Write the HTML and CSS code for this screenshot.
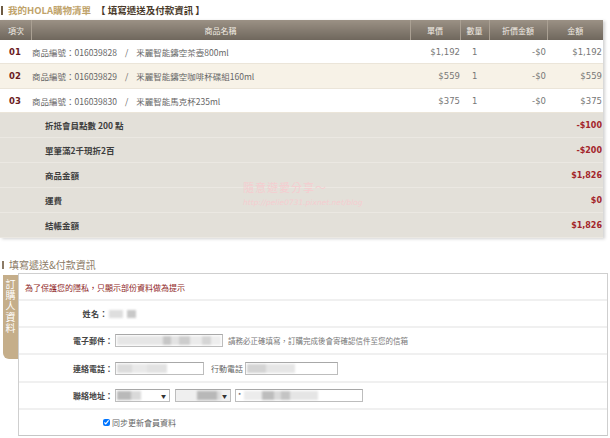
FILE: index.html
```html
<!DOCTYPE html>
<html lang="zh-Hant">
<head>
  <meta charset="UTF-8" />
  <title>我的HOLA購物清單</title>
  <link rel="stylesheet" href="styles.css">
</head>
<body>
  <div class="page">

    <h2 class="sec-title">
      <span class="bar"></span>
      <span class="gold">我的HOLA購物清單</span><span class="dark">【 填寫遞送及付款資訊 】</span>
    </h2>

    <div class="cart-wrap">
      <table class="cart">
        <colgroup>
          <col style="width:31px"><col style="width:379px"><col style="width:50px">
          <col style="width:29px"><col style="width:58px"><col style="width:56px">
        </colgroup>
        <thead>
          <tr>
            <th class="th-no">項次</th>
            <th>商品名稱</th>
            <th>單價</th>
            <th>數量</th>
            <th>折價金額</th>
            <th>金額</th>
          </tr>
        </thead>
        <tbody>
          <tr class="item">
            <td class="no">01</td>
            <td class="name">商品編號：016039828<span class="slash">/</span>釆麗智能鑄空茶壺800ml</td>
            <td class="num price">$1,192</td>
            <td class="num qty">1</td>
            <td class="num disc">-$0</td>
            <td class="num amt">$1,192</td>
          </tr>
          <tr class="item alt">
            <td class="no">02</td>
            <td class="name">商品編號：016039829<span class="slash">/</span>釆麗智能鑄空咖啡杯碟組160ml</td>
            <td class="num price">$559</td>
            <td class="num qty">1</td>
            <td class="num disc">-$0</td>
            <td class="num amt">$559</td>
          </tr>
          <tr class="item">
            <td class="no">03</td>
            <td class="name">商品編號：016039830<span class="slash">/</span>釆麗智能馬克杯235ml</td>
            <td class="num price">$375</td>
            <td class="num qty">1</td>
            <td class="num disc">-$0</td>
            <td class="num amt">$375</td>
          </tr>
          <tr class="sum">
            <td colspan="4" class="sum-label">折抵會員點數 200 點</td>
            <td colspan="2" class="sum-val">-$100</td>
          </tr>
          <tr class="sum">
            <td colspan="4" class="sum-label">單筆滿2千現折2百</td>
            <td colspan="2" class="sum-val">-$200</td>
          </tr>
          <tr class="sum">
            <td colspan="4" class="sum-label">商品金額</td>
            <td colspan="2" class="sum-val">$1,826</td>
          </tr>
          <tr class="sum">
            <td colspan="4" class="sum-label">運費</td>
            <td colspan="2" class="sum-val">$0</td>
          </tr>
          <tr class="sum">
            <td colspan="4" class="sum-label">結帳金額</td>
            <td colspan="2" class="sum-val">$1,826</td>
          </tr>
        </tbody>
      </table>

      <div class="watermark">
        <div class="wm-name">隨意遊愛分享～</div>
        <div class="wm-url">http://pelie0731.pixnet.net/blog</div>
      </div>
    </div>

    <h2 class="sec-title sec-two">
      <span class="bar"></span>
      <span>填寫遞送&amp;付款資訊</span>
    </h2>

    <div class="form-wrap">
      <div class="tab">訂購人資料</div>

      <div class="form-box">
        <div class="row row-note">
          <span class="note">為了保護您的隱私，只顯示部份資料做為提示</span>
        </div>

        <div class="row row-name">
          <span class="label label-name">姓名：</span>
          <span class="blur-text"><i class="b1"></i><i class="b2"></i></span>
        </div>

        <div class="row">
          <span class="label">電子郵件：</span>
          <span class="field f-email"><i class="fill"></i></span>
          <span class="help">請務必正確填寫，訂購完成後會寄確認信件至您的信箱</span>
        </div>

        <div class="row row-tall">
          <span class="label">連絡電話：</span>
          <span class="field f-phone"><i class="fill"></i></span>
          <span class="sub-label">行動電話</span>
          <span class="field f-mobile"><i class="fill"></i></span>
        </div>

        <div class="row">
          <span class="label">聯絡地址：</span>
          <span class="field select s-city"><i class="fill"></i><b>▼</b></span>
          <span class="field select s-area"><i class="fill"></i><b>▼</b></span>
          <span class="field f-addr"><em>*</em><i class="fill"></i></span>
        </div>

        <div class="row row-last">
          <label class="sync"><input type="checkbox" checked> 同步更新會員資料</label>
        </div>
      </div>
    </div>

  </div>
</body>
</html>
```

FILE: styles.css
```css
body {
  margin: 0;
  background: #fff;
  color: #666;
  font-family: "Noto Sans CJK TC", "DejaVu Sans", sans-serif;
}

.page {
  width: 610px;
}

/* section titles */
.sec-title {
  display: flex;
  align-items: center;
  gap: 5px;
  height: 20px;
  margin: 0;
  padding-left: 1px;
  font-size: 9.5px;
  font-weight: bold;
  line-height: 20px;
}

.sec-title .bar {
  width: 2px;
  height: 9px;
  background-color: #6e5c44;
}

.gold {
  color: #bfa36a;
}

.dark {
  color: #4a3a2a;
}

.sec-two {
  height: 16px;
  margin-top: 19px;
  padding-left: 2px;
  font-weight: normal;
  font-size: 10px;
  color: #8c7b66;
}

.sec-two .bar {
  background-color: #8c7b66;
  height: 8px;
}

/* cart table */
.cart-wrap {
  position: relative;
  width: 603px;
}

.cart {
  width: 603px;
  border-collapse: collapse;
  table-layout: fixed;
  box-shadow: 2px 1px 3px rgba(0, 0, 0, 0.18);
}

.cart th {
  height: 20px;
  padding: 0;
  background: linear-gradient(#9b9185, #6f675d);
  border-left: 1px solid #aaa093;
  color: #f2ede5;
  font-size: 8px;
  font-weight: normal;
  text-align: center;
}

.cart th.th-no {
  border-left: none;
  text-align: left;
  padding-left: 8px;
}

.cart td {
  padding: 0;
  white-space: nowrap;
}

.item td {
  height: 23px;
  border-bottom: 1px solid #ebe5d9;
  font-size: 8.5px;
  color: #666;
}

.item.alt td {
  background-color: #f7f2e7;
  height: 24px;
}

.item td.no {
  padding-left: 9px;
  font-family: "DejaVu Sans", sans-serif;
  font-size: 8.5px;
  font-weight: bold;
  color: #6b1b1e;
}

.item td.name {
  padding-left: 1px;
}

.slash {
  margin: 0 8px;
}

.item td.num {
  font-family: "DejaVu Sans", sans-serif;
  font-size: 8.5px;
  color: #777;
}

.item td.price {
  text-align: right;
  padding-right: 0;
}

.item td.qty {
  padding-left: 12px;
}

.item td.disc,
.item td.amt {
  text-align: right;
  padding-right: 1px;
}

.sum td {
  height: 24px;
  background-color: #e3e0d9;
  border-bottom: 1px solid #ebe8e2;
  font-size: 8.5px;
  font-weight: bold;
  color: #3d3d3d;
}

.sum td.sum-label {
  padding-left: 45px;
}

.sum td.sum-val {
  text-align: right;
  padding-right: 1px;
  font-family: "DejaVu Sans", sans-serif;
  font-size: 8px;
  color: #a3262b;
}

.watermark {
  position: absolute;
  left: 243px;
  top: 160px;
  color: #f5cdd0;
  pointer-events: none;
}

.wm-name {
  font-size: 11px;
  line-height: 14px;
  letter-spacing: 1px;
}

.wm-url {
  margin-top: 4px;
  font-family: "DejaVu Sans", sans-serif;
  font-size: 7.5px;
  font-style: italic;
  line-height: 10px;
}

/* buyer form */
.form-wrap {
  display: flex;
  align-items: flex-start;
  margin-left: 3px;
  width: 605px;
}

.tab {
  width: 15px;
  height: 80px;
  margin-top: 2px;
  padding-top: 4px;
  background-color: #c5ae8a;
  border-radius: 0 0 0 6px;
  color: #fff;
  font-size: 10px;
  line-height: 15px;
  writing-mode: vertical-rl;
  text-align: left;
  letter-spacing: 1px;
}

.form-box {
  flex: 1;
  border: 1px solid #cfcfcf;
  border-bottom-color: #c6c6c6;
}

.row {
  display: flex;
  align-items: center;
  height: 25px;
  border-bottom: 2px solid #f0f0f0;
  font-size: 8px;
}

.row-note {
  height: 24px;
  margin-top: 1px;
}

.row-tall {
  height: 26px;
}

.row-last {
  border-bottom: none;
}

.note {
  padding-left: 6px;
  color: #8e1d24;
}

.label {
  width: 94px;
  flex: none;
  text-align: right;
  font-weight: bold;
  color: #444;
}

.label-name {
  width: 89px;
  letter-spacing: 0.5px;
}

.blur-text {
  display: flex;
  gap: 4px;
  margin-left: 1px;
}

.blur-text i {
  display: block;
  height: 8px;
  filter: blur(1px);
}

.blur-text .b1 {
  width: 14px;
  background-color: #dedede;
}

.blur-text .b2 {
  width: 9px;
  background-color: #c8c8c8;
}

.field {
  position: relative;
  display: flex;
  align-items: center;
  height: 11px;
  margin-left: 2px;
  border: 1px solid #bdbdbd;
  border-top-color: #a8a8a8;
  background-color: #fff;
  overflow: hidden;
}

.field .fill {
  display: block;
  height: 9px;
  margin-left: 1px;
  filter: blur(1px);
}

.f-email {
  width: 106px;
}

.f-email .fill {
  width: 104px;
  background: linear-gradient(90deg, #e6e6e6 0 44%, #c6c6c6 44% 52%, #e3e3e3 52% 60%, #cdcdcd 60% 70%, #ebebeb 70% 82%, #d5d5d5 82% 90%, #eeeeee 90%);
}

.help {
  margin-left: 5px;
  font-size: 7.5px;
  color: #777;
}

.f-phone {
  width: 87px;
}

.f-phone .fill {
  width: 50px;
  background: linear-gradient(90deg, #dcdcdc 0 30%, #e9e9e9 30% 60%, #e2e2e2 60%);
}

.sub-label {
  margin-left: 7px;
  color: #666;
}

.f-mobile {
  width: 91px;
  margin-left: 2px;
}

.f-mobile .fill {
  width: 48px;
  background: linear-gradient(90deg, #d4d4d4 0 40%, #e6e6e6 40%);
}

.select b {
  position: absolute;
  right: 3px;
  top: 1px;
  font-size: 5px;
  line-height: 9px;
  color: #333;
}

.s-city {
  width: 53px;
}

.s-city .fill {
  width: 24px;
  background: linear-gradient(90deg, #b9b9b9 0 60%, #d9d9d9 60%);
}

.s-area {
  width: 54px;
  margin-left: 5px;
  background-color: #f1f1f1;
}

.s-area .fill {
  width: 44px;
  background: linear-gradient(90deg, #efefef 0 45%, #b8b8b8 45% 90%, #dcdcdc 90%);
}

.f-addr {
  width: 126px;
  margin-left: 4px;
}

.f-addr em {
  margin-left: 2px;
  font-style: normal;
  font-size: 7px;
  line-height: 9px;
  color: #555;
}

.f-addr .fill {
  width: 74px;
  margin-left: 3px;
  background: linear-gradient(90deg, #ececec 0 25%, #bdbdbd 25% 40%, #dadada 40% 50%, #c4c4c4 50% 62%, #e5e5e5 62%);
}

.sync {
  display: flex;
  align-items: center;
  gap: 2px;
  margin-left: 84px;
  color: #666;
}

.sync input {
  width: 7px;
  height: 7px;
  margin: 0;
}
```
